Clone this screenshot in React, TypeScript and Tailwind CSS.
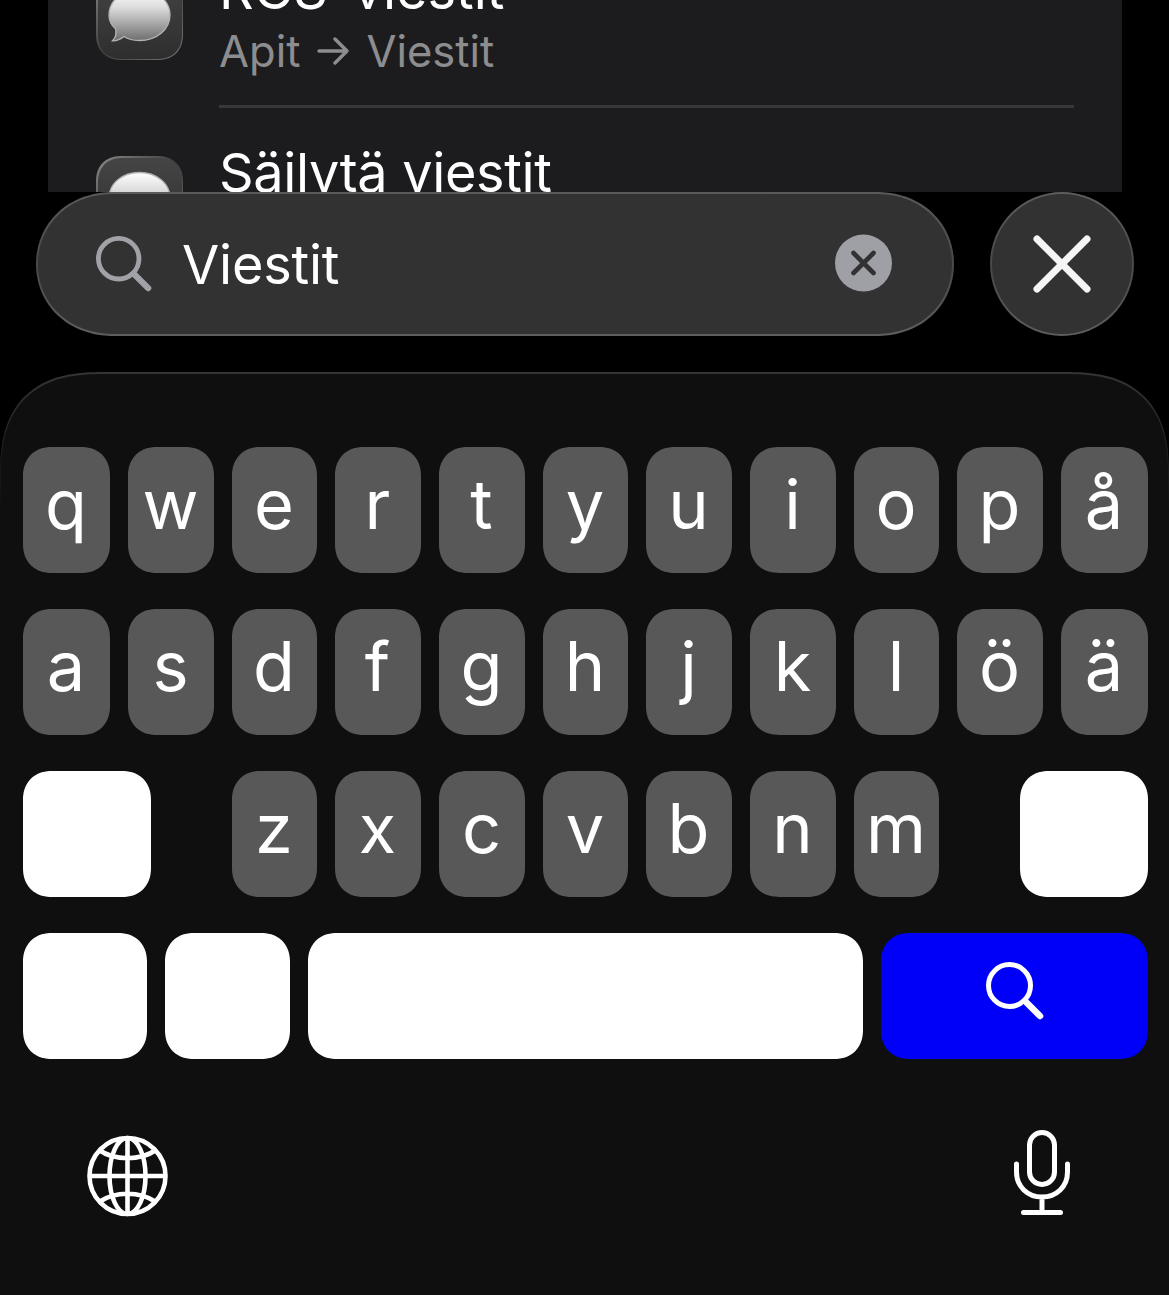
import type { ReactNode } from "react";

const topRow = ["q", "w", "e", "r", "t", "y", "u", "i", "o", "p", "å"];
const homeRow = ["a", "s", "d", "f", "g", "h", "j", "k", "l", "ö", "ä"];
const bottomRow = ["z", "x", "c", "v", "b", "n", "m"];

const letterGrid =
  "grid grid-cols-[87px_86px_85px_86px_86px_85px_86px_86px_85px_86px_87px] gap-[18px]";
const keyShape = "h-[126px] rounded-[29px] [corner-shape:superellipse(1.15)]";

function MessagesIcon() {
  return (
    <div className="w-[87px] h-[87px] shrink-0 rounded-[26px] [corner-shape:superellipse(1.2)] bg-linear-135 from-[#8c8c8c] via-[#3c3c3c] to-[#7c7c7c] p-[1.5px]">
      <div className="w-full h-full rounded-[25px] [corner-shape:superellipse(1.2)] bg-linear-to-b from-[#454545] to-[#2e2e2e]">
        <svg viewBox="0 0 84 84" className="w-full h-full">
          <defs>
            <linearGradient id="bubble" x1="0" y1="0" x2="0" y2="1">
              <stop offset="0" stopColor="#ffffff" />
              <stop offset="0.35" stopColor="#dcdcdc" />
              <stop offset="1" stopColor="#6e6e6e" />
            </linearGradient>
          </defs>
          <path
            d="M41.500 14.500c17 0 30.500 11 30.500 25.500S58.500 65.500 41.500 65.500c-6.500 0-11.500-1.200-15.500-4-3 2.500-7 4.500-11.500 4.300 3-3 4-7.500 3-12-4.500-4-6.500-9-6.500-13.500 0-15 13.500-25.800 30.500-25.800z"
            fill="url(#bubble)"
            stroke="#b4b4b4"
            strokeWidth="1.300"
          />
        </svg>
      </div>
    </div>
  );
}

function SearchIcon({ className }: { className: string }) {
  return (
    <svg viewBox="0 0 58 58" fill="none" stroke="currentColor" strokeLinecap="round" className={className}>
      <circle cx="23.500" cy="23.500" r="21" strokeWidth="5" />
      <path d="M40 40L54 54" strokeWidth="6.500" />
    </svg>
  );
}

function Key({ children }: { children: ReactNode }) {
  return (
    <div className={`${keyShape} bg-[#585858] pr-px text-center text-[68.5px] leading-[116px] text-white`}>
      {children}
    </div>
  );
}

export default function App() {
  return (
    <div className="w-[1169px] h-[1295px] overflow-hidden bg-black font-['Inter',sans-serif]">
      {/* Results */}
      <div className="mx-12 w-[1074px] h-[192px] overflow-hidden bg-[#1c1c1e] pl-12">
        <div className="-mt-[27px] flex h-[135px] gap-9">
          <MessagesIcon />
          <div className="w-[855px] border-b-[3px] border-[#38383a]">
            <div className="h-[50px] whitespace-nowrap text-[54px] leading-[34px] text-white">RCS-viestit</div>
            <div className="flex h-[56px] items-center whitespace-nowrap text-[43.5px] leading-[56px] text-[#8d8d8f]">
              Apit
              <svg viewBox="0 0 32 28" fill="none" stroke="currentColor" strokeWidth="3.400" strokeLinecap="round" strokeLinejoin="round" className="ml-[17px] mr-[17px] w-8 h-7">
                <path d="M2 14h28M18 2l12 12-12 12" />
              </svg>
              Viestit
            </div>
          </div>
        </div>
        <div className="flex gap-9 pt-12">
          <MessagesIcon />
          <div className="-mt-[11px] whitespace-nowrap text-[54px] leading-[56px] tracking-[-0.35px] text-white">Säilytä viestit</div>
        </div>
      </div>

      {/* Search field */}
      <div className="flex gap-9 pl-9">
        <div className="w-[918px] h-[144px] rounded-[77px/72px] [corner-shape:superellipse(1.05)] bg-linear-to-b from-[#5a5a5a] via-[#484848] to-[#5e5e5e] p-[2px]">
          <div className="flex h-full items-center rounded-[75px/70px] [corner-shape:superellipse(1.05)] bg-[#323232] pl-[58px]">
            <SearchIcon className="-mt-px w-[56px] h-[56px] text-[#a1a1a8]" />
            <div className="ml-[30px] mt-[2px] text-[54px] leading-none tracking-[-0.2px] text-white">Viestit</div>
            <svg viewBox="0 0 58 58" className="-mt-[3px] ml-auto mr-[60px] w-[58px] h-[58px]">
              <circle cx="29.500" cy="29" r="28.500" fill="#9f9fa6" />
              <path d="M19.500 19l20 20M39.500 19L19.500 39" stroke="#323232" strokeWidth="4.600" strokeLinecap="round" />
            </svg>
          </div>
        </div>
        <div className="w-[144px] h-[144px] rounded-full bg-linear-to-b from-[#5e5e5e] via-[#484848] to-[#5e5e5e] p-[2px]">
          <div className="flex h-full items-center justify-center rounded-full bg-[#323232]">
            <svg viewBox="0 0 60 60" className="w-[60px] h-[60px]">
              <path d="M5 5l50 50M55 5L5 55" stroke="#f5f5f5" strokeWidth="7" strokeLinecap="round" />
            </svg>
          </div>
        </div>
      </div>

      {/* Keyboard */}
      <div className="mt-9 h-[923px] rounded-t-[104px] [corner-shape:superellipse(1.36)] bg-linear-to-b from-[#353535] to-[#0f0f0f] to-15% pt-[2px] px-px">
        <div className="h-full rounded-t-[103px] [corner-shape:superellipse(1.36)] bg-[#0f0f0f] pl-[22px] pt-[73px]">
          <div className="flex w-[1125px] flex-col gap-9">
            <div className={letterGrid}>
              {topRow.map((k) => (
                <Key key={k}>{k}</Key>
              ))}
            </div>
            <div className={letterGrid}>
              {homeRow.map((k) => (
                <Key key={k}>{k}</Key>
              ))}
            </div>
            <div className="flex justify-between">
              <div className={`${keyShape} w-[128px] bg-white`} />
              <div className="grid grid-cols-[85px_86px_86px_85px_86px_86px_85px] gap-[18px]">
                {bottomRow.map((k) => (
                  <Key key={k}>{k}</Key>
                ))}
              </div>
              <div className={`${keyShape} w-[128px] bg-white`} />
            </div>
            <div className="flex gap-[18px]">
              <div className={`${keyShape} w-[124px] bg-white`} />
              <div className={`${keyShape} w-[125px] bg-white`} />
              <div className={`${keyShape} w-[555px] bg-white`} />
              <div className={`${keyShape} w-[267px] bg-[#0000f8] pl-[105px] pt-[29px] text-white`}>
                <SearchIcon className="w-[58px] h-[58px]" />
              </div>
            </div>
          </div>

          <div className="mt-[70px] flex w-[1125px] justify-between text-white">
            <svg viewBox="0 0 82 82" fill="none" stroke="currentColor" strokeWidth="4.600" className="ml-[64px] mt-[6px] w-[82px] h-[82px]">
              <circle cx="40.500" cy="41" r="38" />
              <ellipse cx="40.500" cy="41" rx="18" ry="38" />
              <path d="M40.500 3v76M2.500 41h76M12 15c16 11 41 11 57 0M12 67c16-11 41-11 57 0" />
            </svg>
            <svg viewBox="0 0 58 88" fill="none" stroke="currentColor" strokeWidth="5" strokeLinecap="round" className="mr-[77px] w-[58px] h-[88px]">
              <rect x="16.500" y="3.500" width="25" height="52" rx="12.500" />
              <path d="M3.500 35v8c0 14.500 11 25 25.500 25s25.500-10.500 25.500-25v-8M29 68v15M10.500 83.500h37" />
            </svg>
          </div>
        </div>
      </div>
    </div>
  );
}
